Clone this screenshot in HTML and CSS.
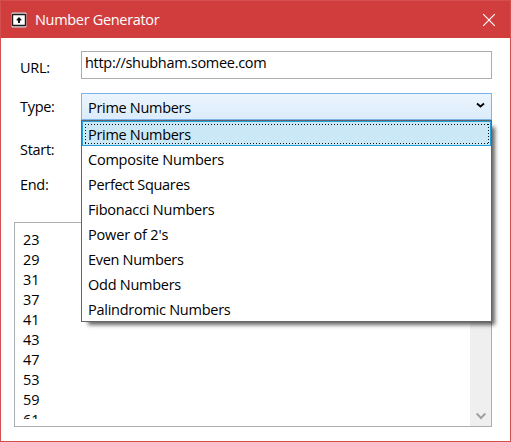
FILE: index.html
```html
<!DOCTYPE html>
<html lang="en">
<head>
<meta charset="utf-8">
<title>Number Generator</title>
<link rel="stylesheet" href="styles.css">
</head>
<body>
<div class="window">
  <header class="titlebar">
    <svg class="app-icon" width="16" height="16" viewBox="0 0 16 16">
      <rect x=".5" y=".5" width="15" height="15" rx="1" fill="#ddd"/>
      <rect x="1.500" y="2.500" width="13" height="11" rx=".5" fill="#fff" stroke="#1b1b1b" stroke-width="1.400"/>
      <path d="M8 5l2.400 2.500v1H9V11H7V8.500H5.600v-1z" fill="#111"/>
    </svg>
    <h1 class="title">Number Generator</h1>
    <svg class="close" width="14" height="14" viewBox="0 0 14 14"><path d="M1.200 1.200l11.600 11.600M12.800 1.200L1.200 12.800" stroke="#fff" stroke-width="1.200"/></svg>
  </header>
  <main class="content">
    <div class="row url-row"><label>URL:</label><div class="textbox">http://shubham.somee.com</div></div>
    <div class="row type-row">
      <label>Type:</label>
      <div class="combo">
        <span>Prime Numbers</span>
        <svg width="9" height="7" viewBox="0 0 9 7"><path d="M1 1.500l3.500 3 3.500-3" fill="none" stroke="#000" stroke-width="1.800"/></svg>
        <ul class="popup">
          <li class="selected">Prime Numbers</li>
          <li class="composite">Composite Numbers</li>
          <li>Perfect Squares</li>
          <li class="fibonacci">Fibonacci Numbers</li>
          <li class="power">Power of 2's</li>
          <li>Even Numbers</li>
          <li class="odd">Odd Numbers</li>
          <li class="palindromic">Palindromic Numbers</li>
        </ul>
      </div>
    </div>
    <div class="row start-row"><label>Start:</label></div>
    <div class="row end-row"><label>End:</label></div>
    <div class="results">
      <div class="viewport"><ul class="numbers"><li>23</li><li>29</li><li>31</li><li>37</li><li>41</li><li>43</li><li>47</li><li>53</li><li>59</li><li>61</li></ul></div>
      <div class="scrollbar"><svg width="10" height="8" viewBox="0 0 10 8"><path d="M.7 1.500L5 6l4.300-4.500" fill="none" stroke="#a0a0a0" stroke-width="2"/></svg></div>
    </div>
  </main>
</div>
</body>
</html>
```
FILE: styles.css
```css
* { box-sizing: border-box; }
body { margin: 0; font: 14.5px/20px "Open Sans", "Noto Sans", sans-serif; letter-spacing: -.3px; color: #000; }
ul { list-style: none; margin: 0; padding: 0; }
.window { width: 511px; height: 442px; border: 1px solid #d45050; background: #fff; overflow: hidden; }
.titlebar { height: 37px; background: #d13d3d; display: flex; align-items: center; padding: 0 14px 0 10px; }
.app-icon { display: block; margin-right: 8px; }
.title { margin: 0; flex: 1; font-size: 14.5px; font-weight: 400; letter-spacing: -.32px; color: #fff; padding-top: 1px; white-space: nowrap; }
.close { display: block; }
.content { padding: 13px 18px 0 13px; }
.row { display: grid; grid-template-columns: 61px 411px; padding-left: 6px; }
.row label { white-space: nowrap; }
.url-row { height: 42px; align-items: start; }
.url-row label { padding-top: 7px; }
.textbox { height: 28px; border: 1px solid #abadb3; padding: 1px 3px; white-space: nowrap; }
.type-row { height: 27px; }
.type-row label { padding-top: 4px; }
.combo { position: relative; height: 27px; border: 1px solid #7eb4ea; background: linear-gradient(#ebf4fc, #dcecfc); padding: 2px 6px 0; display: flex; justify-content: space-between; align-items: center; white-space: nowrap; }
.combo > svg { margin: -5px 0 0; }
.popup { position: absolute; left: -1px; top: 26px; width: 411px; height: 202px; border: 1px solid #646464; background: #fff; box-shadow: 5px 5px 4px -2px rgba(0,0,0,.6); }
.popup li { height: 25px; padding: 4px 6px 1px; }
.popup .selected { position: relative; border: 1px solid #26a0da; background: #cbe8f6; padding: 3px 5px 0; }
.popup .composite, .popup .fibonacci { letter-spacing: -.22px; }
.popup .power { letter-spacing: -.17px; }
.popup .odd, .popup .palindromic { letter-spacing: -.26px; }
/* dotted keyboard-focus rectangle */
.selected::after {
  content: ""; position: absolute; inset: 2px 1px 1px 2px;
  background:
    repeating-linear-gradient(90deg, #111 0 1px, transparent 1px 3px) top / 100% 1px no-repeat,
    repeating-linear-gradient(90deg, #111 0 1px, transparent 1px 3px) bottom / 100% 1px no-repeat,
    repeating-linear-gradient(#111 0 1px, transparent 1px 3px) left / 1px 100% no-repeat,
    repeating-linear-gradient(#111 0 1px, transparent 1px 3px) right / 1px 100% no-repeat;
}
.start-row { height: 35px; margin-top: 20px; }
.end-row { height: 47px; }
.results { height: 205px; border: 1px solid #abadb3; display: flex; }
.viewport { flex: 1; height: 196px; overflow: hidden; padding: 7px 8px 0; }
.numbers { letter-spacing: -.1px; }
.scrollbar { width: 21px; background: #efefef; display: flex; align-items: flex-end; justify-content: center; padding-bottom: 6px; }
```
